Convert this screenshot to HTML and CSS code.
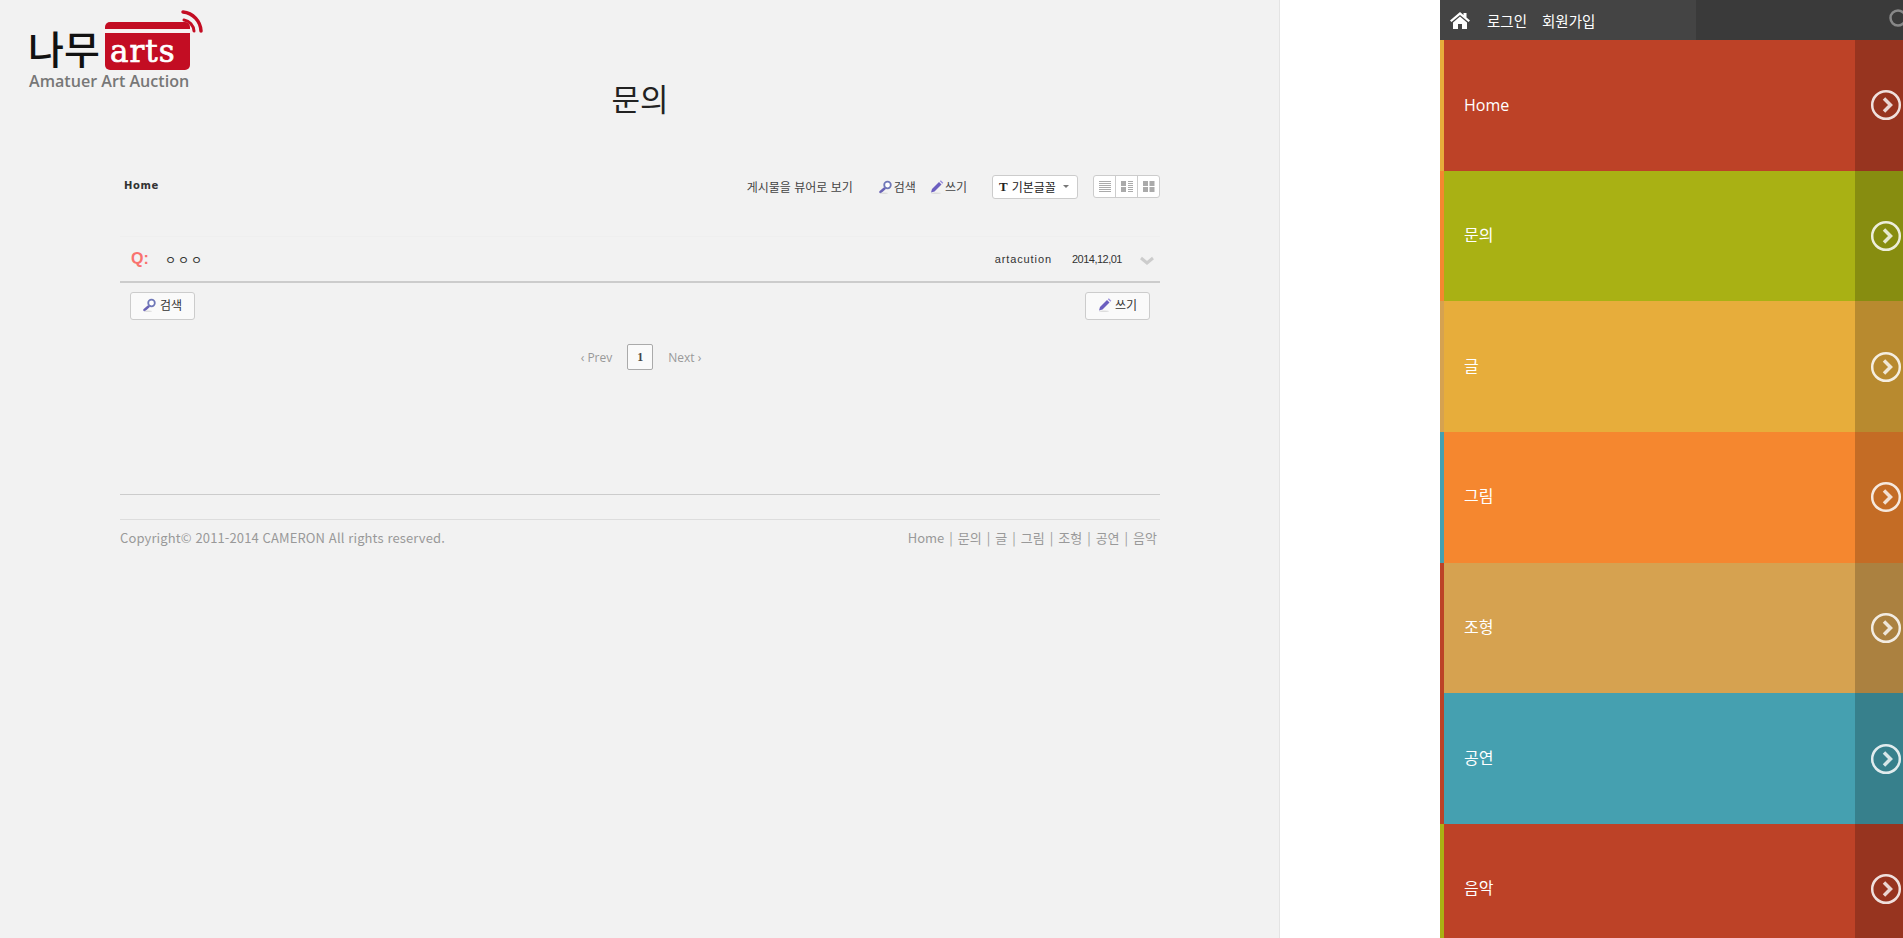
FILE: index.html
```html
<!DOCTYPE html>
<html lang="ko">
  <head>
    <meta charset="UTF-8" />
    <title>문의</title>
    <link rel="stylesheet" href="styles.css">
  </head>
  <body>
    <div class="page">
      <header class="site-head">
        <a class="logo" href="#">
          <svg width="210" height="92" viewBox="0 0 210 92">
            <rect x="105" y="22" width="85" height="48" rx="5" fill="#c30d23" />
            <rect x="102" y="29" width="92" height="4" fill="#f8f1f1" />
            <path d="M183 12a20 20 0 0 1 18 19" fill="none" stroke="#c30d23" stroke-width="3.5" stroke-linecap="round" />
            <path d="M184 20a12 12 0 0 1 10 11" fill="none" stroke="#c30d23" stroke-width="3" stroke-linecap="round" />
            <text class="logo-ko" x="28" y="64">나무</text>
            <text class="logo-arts" x="110" y="62">arts</text>
            <text class="logo-sub" x="29" y="87">Amatuer Art Auction</text>
          </svg>
        </a>
        <h1>문의</h1>
      </header>

      <main class="board">
        <div class="toolbar">
          <a class="crumb" href="#">Home</a>
          <div class="tools">
            <a class="tool tool-viewer" href="#">게시물을 뷰어로 보기</a>
            <a class="tool tool-search" href="#">
              <svg class="ico" viewBox="0 0 14 14"><use href="#i-search" /></svg>검색
            </a>
            <a class="tool tool-write" href="#">
              <svg class="ico" viewBox="0 0 14 14"><use href="#i-pencil" /></svg>쓰기
            </a>
            <div class="font-select">
              <span class="font-t">T</span>
              <span>기본글꼴</span>
              <span class="caret"></span>
            </div>
            <div class="views">
              <span class="view"><svg viewBox="0 0 12 11"><path d="M0 .5h12M0 2.500h12M0 4.500h12M0 6.500h12M0 8.500h12M0 10.500h12" stroke="#aaa" /></svg></span>
              <span class="view"><svg viewBox="0 0 12 11"><path d="M0 0h5v5H0zM0 6h5v5H0z" fill="#aaa" /><path d="M7 .5h5M7 2.500h5M7 4.500h5M7 6.500h5M7 8.500h5M7 10.500h5" stroke="#aaa" /></svg></span>
              <span class="view"><svg viewBox="0 0 12 11"><path d="M0 0h5v5H0zM0 6h5v5H0zM6.500 0h5v5h-5zM6.500 6h5v5h-5z" fill="#aaa" /></svg></span>
            </div>
          </div>
        </div>

        <div class="post-row">
          <span class="q">Q:</span>
          <a class="subject" href="#">ㅇㅇㅇ</a>
          <span class="author">artacution</span>
          <span class="date">2014,12,01</span>
          <svg class="more" viewBox="0 0 14 9"><path d="M1 2l6 5 6-5" fill="none" stroke="#ccc" stroke-width="3" /></svg>
        </div>

        <div class="actions">
          <a class="btn" href="#"><svg class="ico" viewBox="0 0 14 14"><use href="#i-search" /></svg>검색</a>
          <a class="btn" href="#"><svg class="ico" viewBox="0 0 14 14"><use href="#i-pencil" /></svg>쓰기</a>
        </div>

        <nav class="pager">
          <a href="#">‹ Prev</a>
          <strong>1</strong>
          <a href="#">Next ›</a>
        </nav>
      </main>

      <footer class="site-foot">
        <p>Copyright© 2011-2014 CAMERON All rights reserved.</p>
        <ul>
          <li>Home</li>
          <li>문의</li>
          <li>글</li>
          <li>그림</li>
          <li>조형</li>
          <li>공연</li>
          <li>음악</li>
        </ul>
      </footer>
    </div>

    <aside class="side">
      <div class="side-top">
        <div class="side-user">
          <svg class="home-ico" viewBox="0 0 22 18">
            <path d="M11 1L1 9.500l1.500 1.500L11 4l8.500 7L21 9.500 17.500 6.500V2h-3v2z" fill="#fff" />
            <path d="M4 11.500L11 5.500l7 6V18h-5v-5H9v5H4z" fill="#fff" />
          </svg>
          <a href="#">로그인</a>
          <a href="#">회원가입</a>
        </div>
        <svg class="side-search" viewBox="0 0 20 20"><circle cx="10" cy="10" r="7.500" fill="none" stroke="#888" stroke-width="2.500" /></svg>
      </div>
      <a class="menu-row c-red s-yellow" href="#"><span>Home</span><b><svg viewBox="0 0 32 32"><use href="#i-go" /></svg></b></a>
      <a class="menu-row ko c-olive s-orange" href="#"><span>문의</span><b><svg viewBox="0 0 32 32"><use href="#i-go" /></svg></b></a>
      <a class="menu-row ko c-yellow s-tan" href="#"><span>글</span><b><svg viewBox="0 0 32 32"><use href="#i-go" /></svg></b></a>
      <a class="menu-row ko c-orange s-teal" href="#"><span>그림</span><b><svg viewBox="0 0 32 32"><use href="#i-go" /></svg></b></a>
      <a class="menu-row ko c-tan s-red" href="#"><span>조형</span><b><svg viewBox="0 0 32 32"><use href="#i-go" /></svg></b></a>
      <a class="menu-row ko c-teal s-red" href="#"><span>공연</span><b><svg viewBox="0 0 32 32"><use href="#i-go" /></svg></b></a>
      <a class="menu-row ko c-red s-olive" href="#"><span>음악</span><b><svg viewBox="0 0 32 32"><use href="#i-go" /></svg></b></a>
    </aside>

    <svg class="defs" width="0" height="0">
      <symbol id="i-search" viewBox="0 0 14 14">
        <path d="M5.500 8.500L1.500 12" stroke="#6a63b5" stroke-width="2.500" stroke-linecap="round" />
        <circle cx="8.500" cy="5" r="3.300" fill="#fff" stroke="#6f78b8" stroke-width="1.800" />
        <ellipse cx="5" cy="13.200" rx="4" ry=".8" fill="#ddd" />
      </symbol>
      <symbol id="i-pencil" viewBox="0 0 14 14">
        <path d="M1 12.500l1-3.500 7-7 2.500 2.500-7 7z" fill="#6c5fc0" />
        <path d="M9.800 1.200l1-1 2.500 2.500-1 1z" fill="#9a8fdc" />
        <ellipse cx="6" cy="13.300" rx="5" ry=".7" fill="#ddd" />
      </symbol>
      <symbol id="i-go" viewBox="0 0 32 32">
        <circle cx="16" cy="16" r="13.800" fill="none" stroke="#fff" stroke-opacity=".85" stroke-width="2.500" />
        <path d="M14 9.500l6.500 6.500-6.500 6.500" fill="none" stroke="#fff" stroke-opacity=".8" stroke-width="3.500" />
      </symbol>
    </svg>
  </body>
</html>
```

FILE: styles.css
```css
* {
  box-sizing: border-box;
}

html,
body {
  height: 100%;
}

body {
  margin: 0;
  display: flex;
  justify-content: space-between;
  overflow: hidden;
  background: #fff;
  font-family: "Noto Sans CJK KR", "Liberation Sans", sans-serif;
  color: #333;
}

a {
  color: inherit;
  text-decoration: none;
}

.defs {
  position: absolute;
}

/* Left document */
.page {
  width: 1280px;
  height: 938px;
  flex: none;
  background: #f2f2f2;
  border-right: 1px solid #e4e4e4;
}

.site-head {
  position: relative;
  height: 172px;
}

.logo {
  position: absolute;
  left: 0;
  top: 0;
}

.logo svg {
  display: block;
}

.logo-ko {
  font: 500 39px "Noto Sans CJK KR", sans-serif;
  fill: #111;
}

.logo-arts {
  font: 400 31px "DejaVu Serif", serif;
  fill: #fff;
  stroke: #fff;
  stroke-width: 0.7px;
  letter-spacing: 1px;
}

.logo-sub {
  font: 600 16.100px "Open Sans", sans-serif;
  fill: #777;
}

h1 {
  margin: 0;
  padding-top: 77px;
  padding-left: 1px;
  text-align: center;
  font-size: 31px;
  line-height: 42px;
  font-weight: 400;
  color: #222;
}

.board {
  margin: 0 119px 0 120px;
  height: 323px;
  border-bottom: 1px solid #ccc;
}

.toolbar {
  display: flex;
  justify-content: space-between;
  align-items: center;
  height: 29px;
}

.crumb {
  padding-left: 4px;
  padding-bottom: 3px;
  font: 700 10px "DejaVu Sans", sans-serif;
  letter-spacing: 0.6px;
  color: #333;
}

.tools {
  display: flex;
  align-items: center;
  font-size: 12px;
  color: #444;
}

.tool {
  display: flex;
  align-items: center;
  gap: 1px;
}

.tool-viewer {
  margin-right: 26px;
}

.tool-search {
  margin-right: 14px;
}

.tool-write {
  margin-right: 25px;
}

.ico {
  width: 14px;
  height: 14px;
  flex: none;
}

.font-select {
  display: flex;
  align-items: center;
  width: 86px;
  height: 24px;
  padding: 0 6px;
  margin-right: 15px;
  background: #fff;
  border: 1px solid #ccc;
  border-radius: 3px;
  color: #222;
}

.font-t {
  margin-right: 4px;
  font: 700 13px "Liberation Serif", serif;
}

.caret {
  margin-left: auto;
  margin-right: 2px;
  border: 3px solid transparent;
  border-top: 3px solid #777;
  border-bottom: 0;
}

.views {
  display: flex;
  width: 67px;
  height: 23px;
  background: #fff;
  border: 1px solid #ccc;
  border-radius: 3px;
}

.view {
  display: flex;
  flex: 1;
  align-items: center;
  justify-content: center;
}

.view + .view {
  border-left: 1px solid #ccc;
}

.view svg {
  width: 12px;
  height: 11px;
}

.post-row {
  display: flex;
  align-items: center;
  height: 47px;
  margin-top: 35px;
  padding: 0 6px 0 11px;
  border-top: 1px solid #efefef;
  border-bottom: 2px solid #ccc;
  font-size: 11px;
}

.q {
  width: 34px;
  font: 700 16px "Liberation Sans", sans-serif;
  color: #f9736f;
}

.subject {
  margin-right: auto;
  font-size: 12px;
  letter-spacing: 2px;
  color: #333;
}

.author {
  font-family: "Liberation Sans", sans-serif;
  letter-spacing: 0.9px;
  margin-right: 20px;
}

.date {
  font-family: "Liberation Sans", sans-serif;
  letter-spacing: -0.5px;
  margin-right: 18px;
}

.more {
  width: 14px;
  height: 9px;
  margin-top: 2px;
}

.actions {
  display: flex;
  justify-content: space-between;
  padding: 9px 10px 0;
}

.btn {
  display: flex;
  align-items: center;
  justify-content: center;
  gap: 3px;
  width: 65px;
  height: 28px;
  padding-bottom: 3px;
  background: #fafafa;
  border: 1px solid #ccc;
  border-radius: 3px;
  font-size: 12px;
  color: #333;
}

.pager {
  display: flex;
  justify-content: center;
  align-items: center;
  gap: 15px;
  margin-top: 24px;
  padding-left: 2px;
  font: 12px "Open Sans", sans-serif;
  color: #999;
}

.pager strong {
  display: flex;
  align-items: center;
  justify-content: center;
  width: 26px;
  height: 26px;
  background: #fafafa;
  border: 1px solid #aaa;
  border-radius: 2px;
  font: 700 12px "Liberation Serif", serif;
  color: #444;
}

.site-foot {
  display: flex;
  justify-content: space-between;
  align-items: center;
  margin: 24px 119px 0 120px;
  padding: 8px 3px 0 0;
  border-top: 1px solid #ddd;
  font-size: 13px;
  line-height: 20px;
  color: #999;
}

.site-foot p {
  margin: 0;
  letter-spacing: 0.12px;
}

.site-foot ul {
  display: flex;
  margin: 0;
  padding: 0;
  list-style: none;
}

.site-foot li + li::before {
  content: "|";
  margin: 0 5px;
}

/* Right menu */
.side {
  width: 463px;
  height: 938px;
  flex: none;
  overflow: hidden;
  background: #3a3a3a;
  color: #fff;
}

.side-top {
  display: flex;
  justify-content: space-between;
  align-items: center;
  height: 40px;
}

.side-user {
  display: flex;
  align-items: center;
  gap: 15px;
  width: 256px;
  height: 40px;
  padding-left: 9px;
  background: #444;
  font-size: 14.500px;
}

.home-ico {
  width: 22px;
  height: 18px;
  margin-right: 1px;
}

.side-search {
  width: 20px;
  height: 20px;
  margin: 0 -5px 4px 0;
}

.menu-row {
  display: flex;
  align-items: center;
  justify-content: space-between;
  height: 130.670px;
  padding-left: 20px;
  border-left: 4px solid;
  font: 16px "Open Sans", "Noto Sans CJK KR", sans-serif;
}

.menu-row.ko span {
  margin-bottom: 4px;
}

.menu-row b {
  display: flex;
  align-items: center;
  width: 48px;
  height: 100%;
  padding-left: 15px;
  background: rgb(0 0 0 / 0.2);
}

.menu-row svg {
  width: 32px;
  height: 32px;
  flex: none;
}

.c-red { background: #bd4227; }
.c-olive { background: #a9b114; }
.c-yellow { background: #e7ad3b; }
.c-orange { background: #f5872f; }
.c-tan { background: #d6a250; }
.c-teal { background: #45a0b0; }

.s-red { border-left-color: #bd4227; }
.s-olive { border-left-color: #a9b114; }
.s-yellow { border-left-color: #e7ad3b; }
.s-orange { border-left-color: #f5872f; }
.s-tan { border-left-color: #d6a250; }
.s-teal { border-left-color: #45a0b0; }
```
